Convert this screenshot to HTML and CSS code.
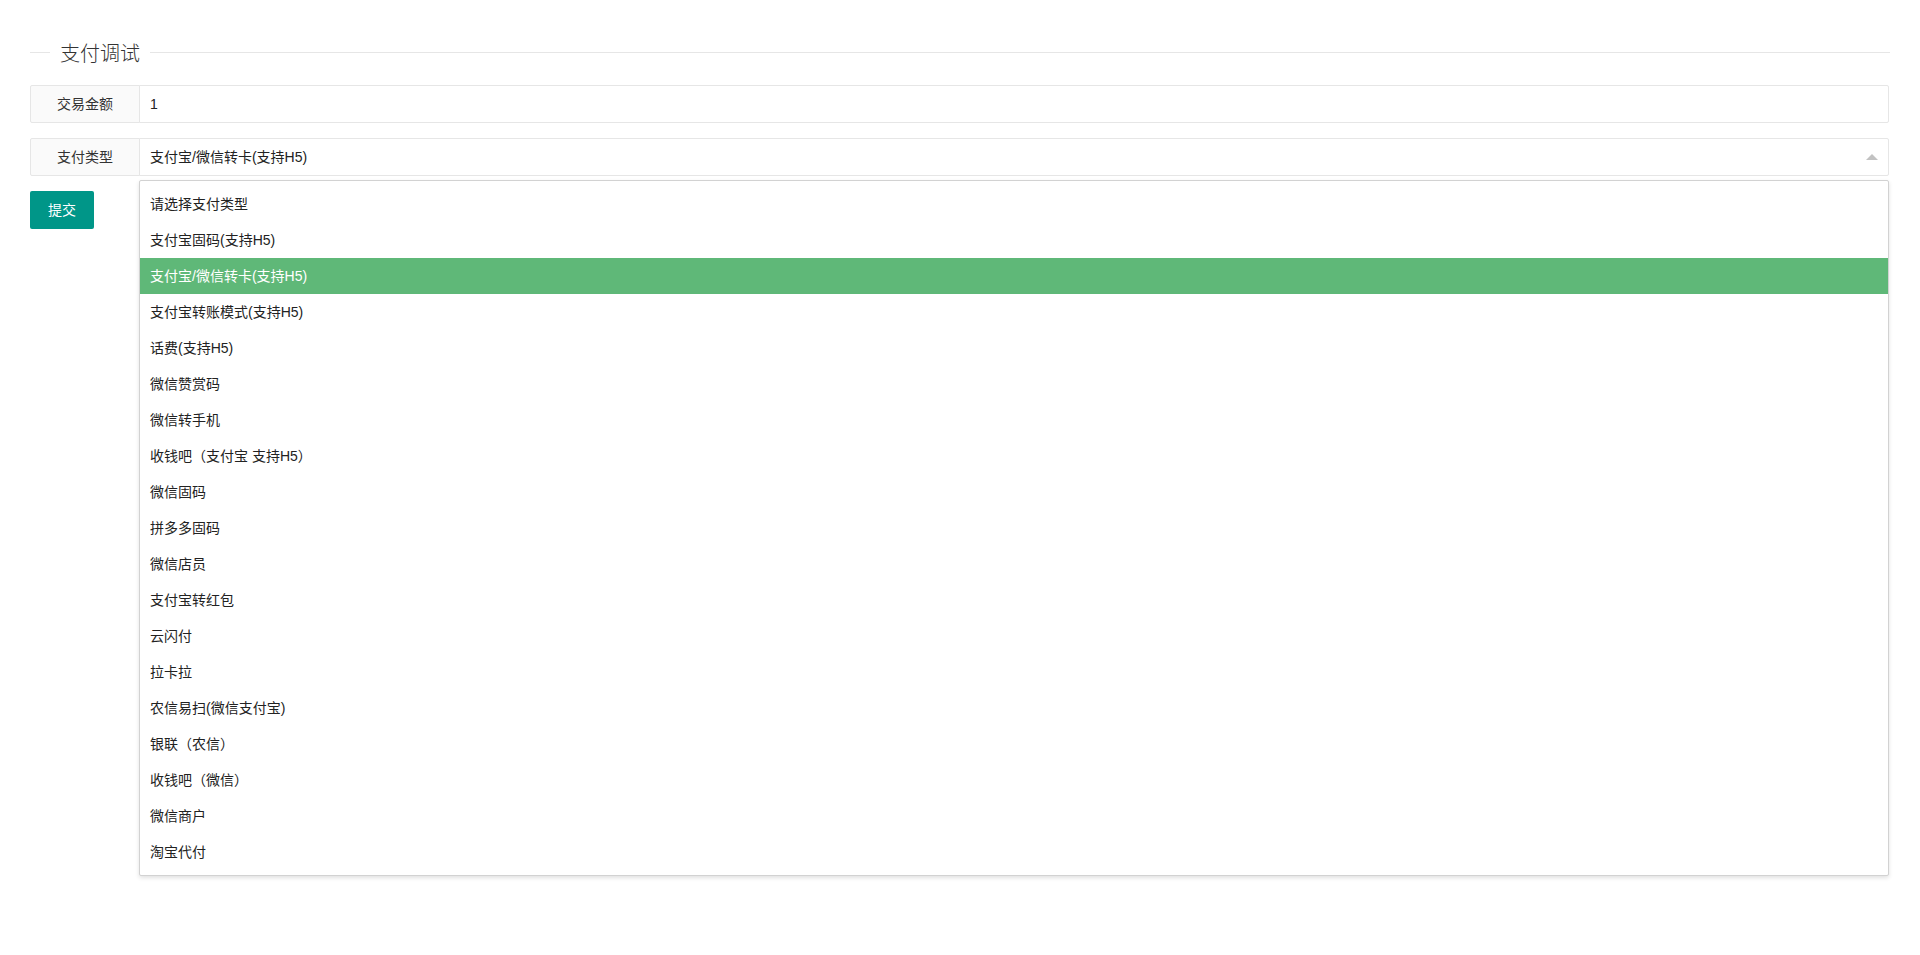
FILE: index.html
```html
<!DOCTYPE html>
<html lang="zh-CN">
<head>
<meta charset="utf-8">
<title>支付调试</title>
<link rel="stylesheet" href="styles.css">
</head>
<body>
<div class="page">
  <div class="field-title">
    <span class="rule rule-left"></span>
    <span class="legend">支付调试</span>
    <span class="rule rule-right"></span>
  </div>
  <form class="form">
    <div class="item">
      <label class="label">交易金额</label>
      <div class="block">
        <input class="input" type="text" value="1">
      </div>
    </div>
    <div class="item item-select">
      <label class="label">支付类型</label>
      <div class="block select">
        <div class="input select-title">支付宝/微信转卡(支持H5)<i class="edge"></i></div>
        <dl class="options">
          <dd>请选择支付类型</dd>
          <dd>支付宝固码(支持H5)</dd>
          <dd class="active">支付宝/微信转卡(支持H5)</dd>
          <dd>支付宝转账模式(支持H5)</dd>
          <dd>话费(支持H5)</dd>
          <dd>微信赞赏码</dd>
          <dd>微信转手机</dd>
          <dd>收钱吧（支付宝 支持H5）</dd>
          <dd>微信固码</dd>
          <dd>拼多多固码</dd>
          <dd>微信店员</dd>
          <dd>支付宝转红包</dd>
          <dd>云闪付</dd>
          <dd>拉卡拉</dd>
          <dd>农信易扫(微信支付宝)</dd>
          <dd>银联（农信）</dd>
          <dd>收钱吧（微信）</dd>
          <dd>微信商户</dd>
          <dd>淘宝代付</dd>
        </dl>
      </div>
    </div>
    <div class="item">
      <button class="btn" type="button">提交</button>
    </div>
  </form>
</div>
</body>
</html>
```
FILE: styles.css
```css
* { box-sizing: border-box; }
html, body { margin: 0; padding: 0; background: #fff; }
html { height: 100%; }
body {
  min-height: 100%;
  font-family: "Liberation Sans", "Noto Sans CJK SC", sans-serif;
  font-size: 14px;
  color: #333;
}
.page {
  min-height: 955px;
  padding: 30px 30px 0 30px;
}

.field-title {
  display: flex;
  align-items: center;
  height: 24px;
  margin-top: 10px;
  margin-bottom: 21px;
}
.rule { height: 1px; background: #e6e6e6; }
.rule-left { width: 20px; flex: none; }
.rule-right { flex: 1; }
.legend {
  padding: 0 10px;
  font-size: 20px;
  font-weight: 300;
  line-height: 24px;
  color: #333;
  position: relative;
  top: 2px;
}

.form { margin: 0; }
.item {
  display: flex;
  margin-bottom: 15px;
}
.item-select {
  position: relative;
  z-index: 5;
}
.label {
  flex: none;
  width: 110px;
  height: 38px;
  line-height: 20px;
  padding: 8px 15px;
  text-align: center;
  background: #fafafa;
  border: 1px solid #e6e6e6;
  border-radius: 2px 0 0 2px;
  color: #333;
  white-space: nowrap;
}
.block {
  flex: 1;
  margin-left: -1px;
  margin-right: 1px;
  position: relative;
}
.input {
  display: block;
  width: 100%;
  height: 38px;
  line-height: 36px;
  padding: 0 10px;
  border: 1px solid #e6e6e6;
  border-radius: 0 2px 2px 0;
  background: #fff;
  font-family: inherit;
  font-size: 14px;
  color: #222;
  outline: none;
}
.select-title { position: relative; }
.edge {
  position: absolute;
  right: 10px;
  top: 15px;
  width: 0;
  height: 0;
  border-style: solid;
  border-width: 0 6px 6px 6px;
  border-color: transparent transparent #c2c2c2 transparent;
}
.options {
  position: absolute;
  left: 0;
  right: 0;
  top: 42px;
  margin: 0;
  padding: 5px 0;
  background: #fff;
  border: 1px solid #d2d2d2;
  border-radius: 2px;
  box-shadow: 0 2px 4px rgba(0, 0, 0, 0.12);
  z-index: 10;
}
.options dd {
  margin: 0;
  padding: 0 10px;
  height: 36px;
  line-height: 36px;
  color: #222;
  white-space: nowrap;
}
.options dd.active {
  background: #5fb878;
  color: #fff;
}

.btn {
  height: 38px;
  line-height: 38px;
  padding: 0 18px;
  border: none;
  border-radius: 2px;
  background: #009688;
  color: #fff;
  font-family: inherit;
  font-size: 14px;
  cursor: pointer;
}
```
